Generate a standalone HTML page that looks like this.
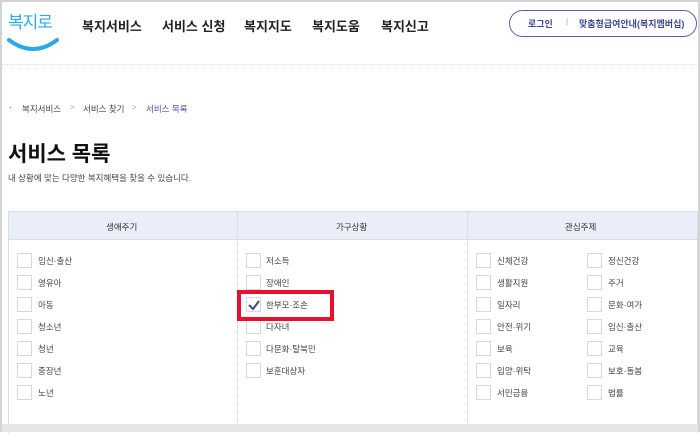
<!DOCTYPE html><html><head><meta charset="utf-8"><style>
*{margin:0;padding:0;box-sizing:border-box}
body{width:700px;height:432px;overflow:hidden;background:#fff;font-family:"Liberation Sans","Noto Sans CJK KR",sans-serif;position:relative;color:#333}
.frame{position:absolute;left:0;top:0;width:700px;height:432px;border:2px solid #d4d4d4;border-right-width:2px}
.a{position:absolute;white-space:nowrap}
.nav{font-size:13px;font-weight:bold;color:#222;top:16px}
.cb{position:absolute;width:15px;height:15px;border:1px solid #d8d8d8;background:#fff}
.lb{position:absolute;font-size:8.5px;color:#444;white-space:nowrap}
</style></head><body>
<div class="frame"></div>
<div class="a" style="left:8px;top:8px;font-size:17px;color:#2aa9e6;font-family:'Noto Sans CJK KR',sans-serif;letter-spacing:-1px">복지로</div>
<svg class="a" style="left:6px;top:36px" width="54" height="18"><path d="M3 4 Q27 22 51 4" stroke="#2aa9e6" stroke-width="4" fill="none" stroke-linecap="round"/></svg>
<div class="a nav" style="left:82px">복지서비스</div>
<div class="a nav" style="left:162px">서비스 신청</div>
<div class="a nav" style="left:244px">복지지도</div>
<div class="a nav" style="left:312px">복지도움</div>
<div class="a nav" style="left:381px">복지신고</div>
<div class="a" style="left:509px;top:10px;width:188px;height:27px;border:1px solid #5a5fa8;border-radius:14px"></div>
<div class="a" style="left:528px;top:17px;font-size:9px;color:#3f4596;font-weight:bold">로그인</div>
<div class="a" style="left:566px;top:17px;font-size:8px;color:#aaa">|</div>
<div class="a" style="left:579px;top:17px;font-size:9px;color:#3f4596;font-weight:bold">맞춤형급여안내(복지멤버십)</div>
<div class="a" style="left:2px;top:64px;width:696px;border-top:1px dotted #ddd"></div>
<div class="a" style="left:9px;top:103px;font-size:8px">·</div>
<div class="a" style="left:22px;top:103px;font-size:8.5px;color:#444">복지서비스</div>
<div class="a" style="left:70px;top:103px;font-size:8px;color:#aaa">&gt;</div>
<div class="a" style="left:83px;top:103px;font-size:8.5px;color:#444">서비스 찾기</div>
<div class="a" style="left:132px;top:103px;font-size:8px;color:#aaa">&gt;</div>
<div class="a" style="left:146px;top:103px;font-size:8.5px;color:#4a4fa0">서비스 목록</div>
<div class="a" style="left:8px;top:138px;font-size:21px;font-weight:bold;color:#111">서비스 목록</div>
<div class="a" style="left:8px;top:172px;font-size:8.5px;color:#444">내 상황에 맞는 다양한 복지혜택을 찾을 수 있습니다.</div>
<div class="a" style="left:8px;top:211px;width:690px;height:222px;border:1px solid #d8dce6;border-bottom:none"></div>
<div class="a" style="left:9px;top:212px;width:688px;height:28px;background:#e9eef8;border-bottom:1px solid #d8dce6"></div>
<div class="a" style="left:237px;top:212px;height:220px;border-left:1px dotted #d0d0d0"></div>
<div class="a" style="left:467px;top:212px;height:220px;border-left:1px dotted #d0d0d0"></div>
<div class="a" style="left:2px;top:424px;width:696px;height:8px;background:#e6e6e6"></div>
<div class="a" style="left:106px;top:221px;font-size:8.5px">생애주기</div>
<div class="a" style="left:336px;top:221px;font-size:8.5px">가구상황</div>
<div class="a" style="left:565px;top:221px;font-size:8.5px">관심주제</div>
<div id="c"></div>
<script>
var rows=[261,283,305,327,349,371,393];
var cols=[[17,38,["임신·출산","영유아","아동","청소년","청년","중장년","노년"]],[246,266,["저소득","장애인","한부모·조손","다자녀","다문화·탈북민","보훈대상자"]],[476,497,["신체건강","생활지원","일자리","안전·위기","보육","입양·위탁","서민금융"]],[587,608,["정신건강","주거","문화·여가","임신·출산","교육","보호·돌봄","법률"]]];
var h="";cols.forEach(function(c){c[2].forEach(function(t,i){var y=rows[i]-8;h+='<div class="cb" style="left:'+c[0]+'px;top:'+y+'px"></div><div class="lb" style="left:'+c[1]+'px;top:'+(y+2)+'px">'+t+'</div>';});});
document.getElementById('c').innerHTML=h;
</script>
<svg class="a" style="left:247px;top:298px" width="14" height="14"><path d="M2 7 L6 11 L12 3" stroke="#3f4596" stroke-width="2" fill="none"/></svg>
<div class="a" style="left:237px;top:290px;width:97px;height:31px;border:4px solid #e8102e"></div>
</body></html>
